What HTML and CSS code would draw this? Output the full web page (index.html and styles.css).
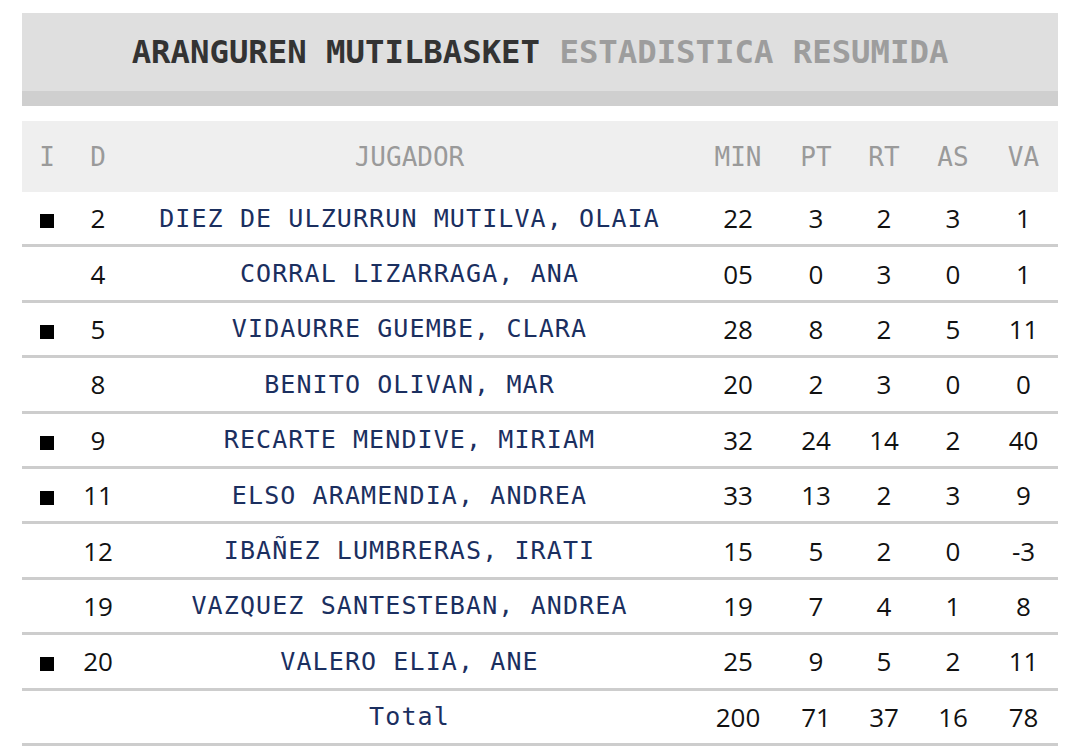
FILE: index.html
```html
<!DOCTYPE html>
<html lang="es">
<head>
<meta charset="utf-8">
<title>Aranguren Mutilbasket - Estadistica resumida</title>
<link rel="stylesheet" href="styles.css">
</head>
<body>
<div class="page">
  <header class="title-box">
    <h1 class="title"><span class="team">ARANGUREN MUTILBASKET</span> <span class="sub">ESTADISTICA RESUMIDA</span></h1>
  </header>
  <table class="stats">
    <colgroup>
      <col class="c-i"><col class="c-d"><col class="c-name"><col class="c-min"><col class="c-pt"><col class="c-rt"><col class="c-as"><col class="c-va">
    </colgroup>
    <thead>
      <tr><th>I</th><th>D</th><th>JUGADOR</th><th>MIN</th><th>PT</th><th>RT</th><th>AS</th><th>VA</th></tr>
    </thead>
    <tbody>
      <tr><td><span class="starter"></span></td><td>2</td><td class="name">DIEZ DE ULZURRUN MUTILVA, OLAIA</td><td>22</td><td>3</td><td>2</td><td>3</td><td>1</td></tr>
      <tr><td></td><td>4</td><td class="name">CORRAL LIZARRAGA, ANA</td><td>05</td><td>0</td><td>3</td><td>0</td><td>1</td></tr>
      <tr><td><span class="starter"></span></td><td>5</td><td class="name">VIDAURRE GUEMBE, CLARA</td><td>28</td><td>8</td><td>2</td><td>5</td><td>11</td></tr>
      <tr><td></td><td>8</td><td class="name">BENITO OLIVAN, MAR</td><td>20</td><td>2</td><td>3</td><td>0</td><td>0</td></tr>
      <tr><td><span class="starter"></span></td><td>9</td><td class="name">RECARTE MENDIVE, MIRIAM</td><td>32</td><td>24</td><td>14</td><td>2</td><td>40</td></tr>
      <tr><td><span class="starter"></span></td><td>11</td><td class="name">ELSO ARAMENDIA, ANDREA</td><td>33</td><td>13</td><td>2</td><td>3</td><td>9</td></tr>
      <tr><td></td><td>12</td><td class="name">IBAÑEZ LUMBRERAS, IRATI</td><td>15</td><td>5</td><td>2</td><td>0</td><td>-3</td></tr>
      <tr><td></td><td>19</td><td class="name">VAZQUEZ SANTESTEBAN, ANDREA</td><td>19</td><td>7</td><td>4</td><td>1</td><td>8</td></tr>
      <tr><td><span class="starter"></span></td><td>20</td><td class="name">VALERO ELIA, ANE</td><td>25</td><td>9</td><td>5</td><td>2</td><td>11</td></tr>
      <tr class="total"><td></td><td></td><td class="name">Total</td><td>200</td><td>71</td><td>37</td><td>16</td><td>78</td></tr>
    </tbody>
  </table>
</div>
</body>
</html>
```

FILE: styles.css
```css
html, body {
  margin: 0;
  padding: 0;
  background: #ffffff;
}

.page {
  padding: 13px 22px 0;
}

.title-box {
  background: #dfdfdf;
  border-bottom: 15px solid #cfcfcf;
  height: 78px;
  display: flex;
  align-items: center;
  justify-content: center;
}

.title {
  margin: 0;
  font-family: "DejaVu Sans Mono", monospace;
  font-weight: bold;
  font-size: 32.3px;
  line-height: 1;
  white-space: nowrap;
}

.title .team {
  color: #333333;
}

.title .sub {
  color: #9d9d9d;
}

.stats {
  margin-top: 15px;
  width: 1036px;
  border-collapse: collapse;
  table-layout: fixed;
}

.c-i { width: 50px; }
.c-d { width: 52px; }
.c-name { width: 571px; }
.c-min { width: 86px; }
.c-pt { width: 70px; }
.c-rt { width: 66px; }
.c-as { width: 72px; }
.c-va { width: 69px; }

.stats th {
  background: #efefef;
  height: 71px;
  padding: 0;
  font-family: "DejaVu Sans Mono", monospace;
  font-weight: normal;
  font-size: 26px;
  color: #9a9a9a;
  text-align: center;
  vertical-align: middle;
}

.stats td {
  height: 52.4px;
  padding: 0;
  border-bottom: 3px solid #cdcdcd;
  font-family: "Open Sans", "Noto Sans", sans-serif;
  font-size: 26px;
  color: #111111;
  text-align: center;
  vertical-align: middle;
  white-space: nowrap;
}

.stats td.name {
  font-family: "DejaVu Sans Mono", monospace;
  font-size: 25px;
  letter-spacing: 1.1px;
  color: #1b2f5f;
}

.starter {
  display: inline-block;
  width: 14px;
  height: 14px;
  background: #000000;
  vertical-align: middle;
}
```
